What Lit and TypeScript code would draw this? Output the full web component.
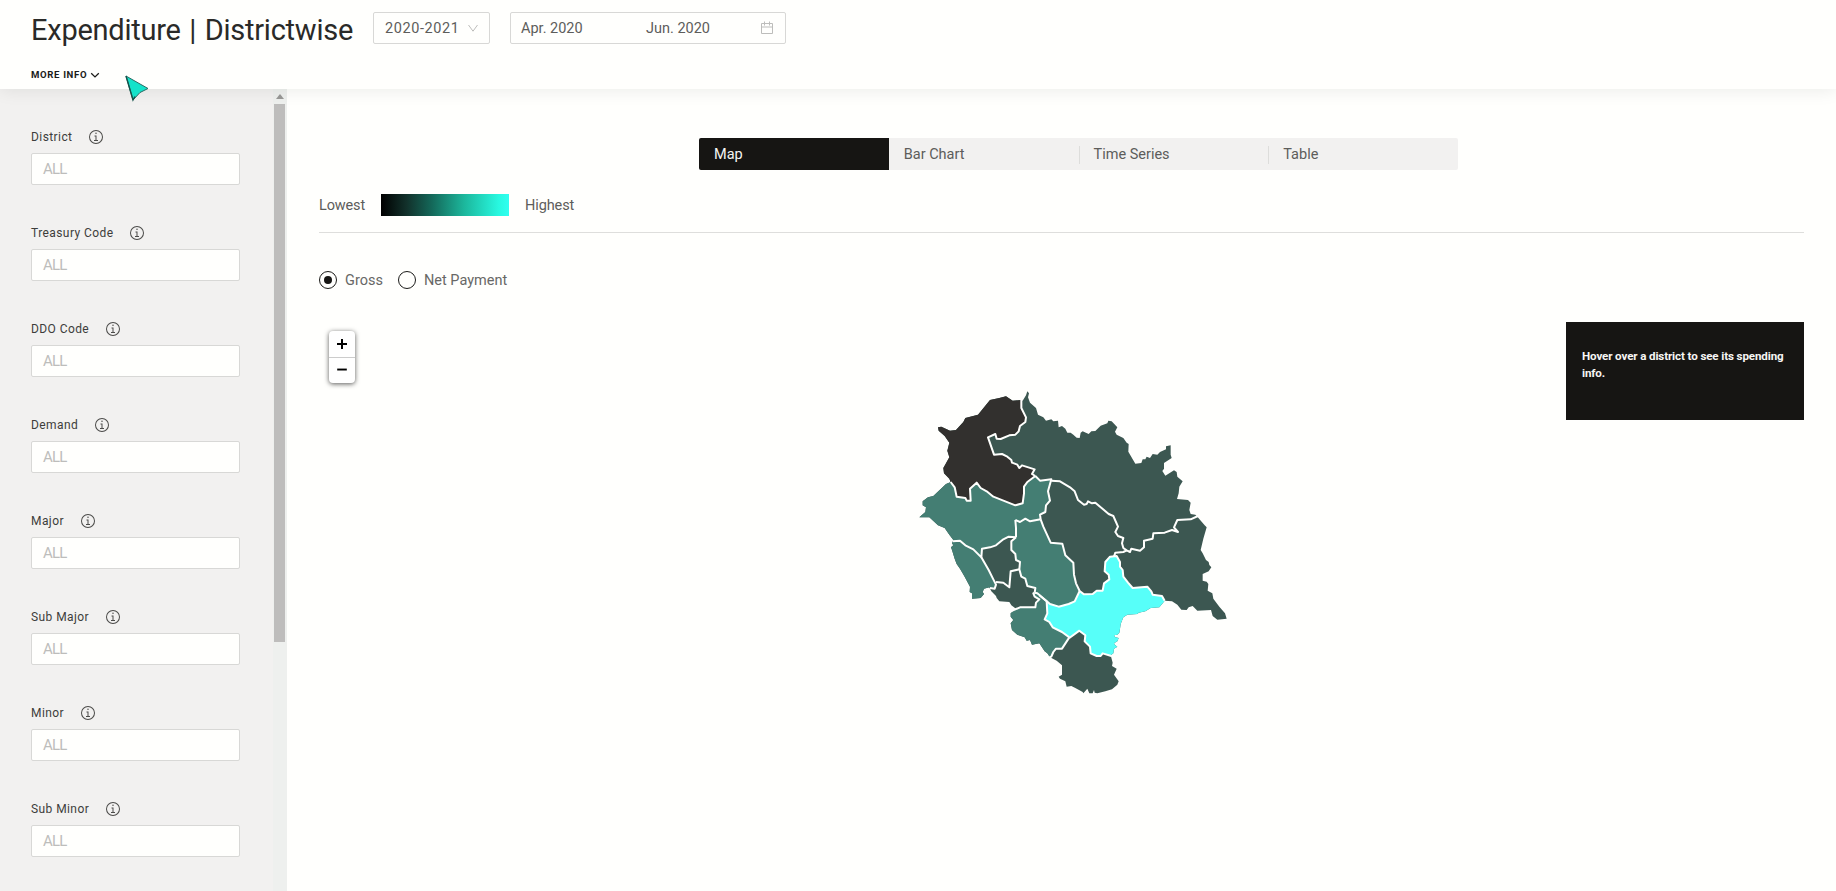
import { LitElement, html, css, svg } from "lit";
import { customElement, property } from "lit/decorators.js";

const OUTLINE =
  "352,34 357,40 354,52 360,68 378,84 384,104 400,112 408,122 424,118 430,124 444,122 446,142 456,138 466,146 472,158 482,158 490,164 500,173 509,174 512,158 518,154 536,162 544,154 556,153 572,137 592,130 595,122 605,124 622,142 615,155 620,164 640,174 650,188 656,192 655,215 676,251 694,249 698,238 706,238 710,230 720,234 728,222 742,224 750,216 768,208 768,199 782,196 782,224 785,234 762,249 762,266 757,273 766,287 792,271 800,276 802,290 818,304 808,320 806,340 801,357 834,360 842,368 838,390 842,402 856,404 862,410 884,436 890,442 880,476 872,510 878,520 888,540 896,546 898,555 904,562 896,574 878,582 878,602 890,605 895,612 893,632 907,640 910,656 928,680 945,700 950,716 922,719 908,708 903,690 862,692 848,678 836,682 830,690 814,689 802,674 786,664 764,662 758,670 748,682 722,684 706,694 686,698 682,702 652,704 640,712 632,732 630,746 628,758 622,764 612,766 616,772 626,774 622,784 612,790 616,796 622,800 612,806 610,820 602,826 608,848 606,858 620,866 612,884 626,904 622,914 606,928 586,934 562,940 554,938 552,930 548,940 538,940 532,926 520,940 518,936 496,924 484,918 470,920 466,904 450,896 446,890 456,884 456,856 440,842 420,832 412,820 404,814 388,790 366,794 360,780 350,782 344,772 322,764 306,750 302,730 310,720 302,710 302,700 318,686 304,676 298,666 268,664 260,654 258,648 244,634 238,622 222,626 218,636 222,642 212,654 186,656 186,640 179,636 180,620 164,590 150,566 140,552 134,536 126,510 123,502 130,496 126,490 130,480 118,464 104,444 84,436 58,412 28,412 46,396 48,382 38,376 38,364 54,352 70,348 108,312 122,306 118,296 102,280 100,264 118,232 112,212 118,188 104,168 86,152 84,142 94,140 120,152 138,150 160,126 166,114 204,104 240,60 268,54 288,49 308,62 333,60 338,62 348,46";

const CHAMBA_EAST =
  "334,54 334,84 348,112 346,126 330,138 326,154 316,164 298,166 272,177 260,176 256,162 234,172 252,224 276,222 292,230 304,240 306,248 322,254 328,264 336,256 374,268 366,282 376,288";
const CHAMBA_SOUTH =
  "122,306 134,322 140,350 166,354 170,362 182,362 180,326 200,308 212,324 230,334 250,350 316,376 338,370 342,340 342,320 352,306 376,288";
const KANGRA_EAST =
  "376,288 390,302 424,298 414,334 420,362 408,376 406,396 390,404 392,418";
const MANDI_NORTH = "392,418 360,424 346,416 330,426 316,420";
const KANGRA_MANDI = "316,420 318,444 318,472";
const KANGRA_SOUTH =
  "318,472 296,470 280,478 258,496 240,502 216,506 214,532 190,508 166,496 150,482 128,484";
const MANDI_EAST =
  "392,418 400,440 422,488 457,491 466,526 490,548 492,584 498,610 509,633";
const MANDI_SOUTH = "509,633 494,664 476,672 446,680 420,672 406,660 382,640 374,638";
const MANDI_WEST =
  "374,638 376,624 352,618 346,596 334,590 328,568 330,546 318,540 316,522 304,510 304,484 318,472";
const UNA_EAST = "214,532 236,570 250,598 258,614 254,626 240,624";
const BILASPUR_NORTH = "328,568 302,574 298,622 280,608 258,606";
const BILASPUR_SOUTH = "374,638 370,640 374,650 388,658 378,668 376,682 330,682 302,694";
const SOLAN_EAST = "388,646 410,664 412,700 404,718 418,726 428,742 456,756 478,772";
const SOLAN_SOUTH = "478,772 456,806 438,806 430,816 424,830 414,834";
const SHIMLA_NORTH =
  "509,633 522,643 548,642 560,632 578,632 582,610 598,598 596,584 584,574 586,546 600,530 620,528 630,546 630,560 638,570 640,590 654,608 668,624 712,620 724,634 728,644 756,648 764,662";
const SHIMLA_SOUTH =
  "604,828 578,820 572,828 560,828 542,820 540,800 524,784 526,766 508,752 478,774";
const LAHAUL_SOUTH =
  "424,302 450,304 480,322 494,334 504,360 522,374 530,372 534,364 546,370 556,368 596,402 610,408 624,440 616,456 624,468 640,474 636,490 640,504 650,511 660,516 664,506 690,512 702,502 702,482 728,476 730,460 764,458 786,450 804,456 792,442 802,420 842,418 864,408";
const KULLU_SOUTH = "650,511 640,516 616,518 612,530";

const rev = (s: string) => s.split(" ").reverse().join(" ");

// Region polygons run loosely past the state's edge; the outline clips them.
const REGIONS = [
  { cls: "lowest", pts: `${CHAMBA_EAST} ${rev(CHAMBA_SOUTH)} 60,300 40,100 200,20 320,20` },
  {
    cls: "mid",
    pts: `${CHAMBA_SOUTH} ${KANGRA_EAST} ${MANDI_NORTH} ${KANGRA_MANDI} ${KANGRA_SOUTH} 60,470 0,420 20,340`,
  },
  { cls: "mid", pts: `128,484 150,482 166,496 190,508 ${UNA_EAST} 220,680 150,660 100,500` },
  {
    cls: "mid",
    pts: `${MANDI_EAST} ${MANDI_SOUTH} ${MANDI_WEST} 318,444 ${rev(MANDI_NORTH)}`,
  },
  {
    cls: "mid",
    pts: `${rev(BILASPUR_SOUTH)} ${SOLAN_EAST} ${SOLAN_SOUTH} 300,800 280,700`,
  },
  {
    cls: "highest",
    pts: `${SHIMLA_NORTH} 790,720 680,780 650,830 ${SHIMLA_SOUTH} ${rev(SOLAN_EAST)} ${rev(MANDI_SOUTH)}`,
  },
];

const BORDERS = [
  CHAMBA_EAST, CHAMBA_SOUTH, KANGRA_EAST, MANDI_NORTH, KANGRA_MANDI, KANGRA_SOUTH,
  MANDI_EAST, MANDI_SOUTH, MANDI_WEST, UNA_EAST, BILASPUR_NORTH, BILASPUR_SOUTH,
  SOLAN_EAST, SOLAN_SOUTH, SHIMLA_NORTH, SHIMLA_SOUTH, LAHAUL_SOUTH, KULLU_SOUTH,
];

@customElement("district-map")
class DistrictMap extends LitElement {
  static styles = css`
    :host { display: block; width: 330px; height: 330px; }
    svg { display: block; width: 100%; height: 100%; }
    .base { fill: #3c5751; }
    .lowest { fill: #32302e; }
    .mid { fill: #447e73; }
    .highest { fill: #57fff9; }
    .border { fill: none; stroke: #fffffd; stroke-width: 6; stroke-linejoin: round; }
  `;
  render() {
    return html`<svg viewBox="0 0 990 990">
      <defs><clipPath id="state"><polygon points=${OUTLINE}></polygon></clipPath></defs>
      <polygon class="base" points=${OUTLINE}></polygon>
      <g clip-path="url(#state)">
        ${REGIONS.map((r) => svg`<polygon class=${r.cls} points=${r.pts}></polygon>`)}
      </g>
      ${BORDERS.map((b) => svg`<polyline class="border" points=${b}></polyline>`)}
    </svg>`;
  }
}

@customElement("filter-field")
class FilterField extends LitElement {
  @property() label = "";
  static styles = css`
    :host { display: block; height: 96px; }
    .head { display: flex; align-items: center; height: 16px; gap: 16px; }
    .name { font-size: 12px; line-height: 16px; letter-spacing: 0.42px; color: #3d3d3b; }
    svg { width: 16px; height: 16px; fill: #4b4b49; }
    .box {
      box-sizing: border-box; width: 209px; height: 32px; margin-top: 8px; padding-left: 11px;
      border: 1px solid #d8d8d6; border-radius: 2px; background: #fffffd;
      font-size: 15px; line-height: 31px; color: #bdbdbb; letter-spacing: -0.8px;
    }
  `;
  render() {
    return html`<div class="head">
        <span class="name">${this.label}</span>
        <svg viewBox="0 0 32 32">
          <path d="M17 22v-9h-4v2h2v7h-3v2h8v-2zM16 7a1.5 1.5 0 1 0 1.5 1.5A1.5 1.5 0 0 0 16 7z"></path>
          <path d="M16 30a14 14 0 1 1 14-14 14 14 0 0 1-14 14zm0-26a12 12 0 1 0 12 12A12 12 0 0 0 16 4z"></path>
        </svg>
      </div>
      <div class="box">ALL</div>`;
  }
}

@customElement("app-root")
class AppRoot extends LitElement {
  static styles = css`
    :host {
      display: flex; flex-direction: column; position: relative; width: 100%; height: 100vh;
      overflow: hidden; background: #fffffd; color: #5d5d5b;
      font-family: Roboto, "Liberation Sans", sans-serif; font-size: 14.5px;
    }
    * { box-sizing: border-box; }
    header {
      flex: none; height: 89px; padding: 12px 31px 0; background: #fffffd; position: relative; z-index: 1;
      box-shadow: 0 2px 16px rgba(0, 20, 10, 0.08);
    }
    .top { display: flex; align-items: flex-start; }
    h1 {
      margin: 0; width: 342px; font-size: 29px; line-height: 36px; font-weight: 400;
      color: #2a2a28; letter-spacing: -0.24px; word-spacing: 1.6px; white-space: nowrap;
    }
    .select, .range {
      display: flex; align-items: center; height: 32px; border: 1px solid #d8d8d6; border-radius: 2px;
    }
    .select { width: 117px; padding: 0 11px; justify-content: space-between; }
    .range { width: 276px; margin-left: 20px; padding: 0 11px 0 10px; }
    .from { width: 125px; }
    .to { flex: 1; }
    .year { letter-spacing: 0.6px; }
    .icon { fill: none; stroke: #bdbdbb; display: block; }
    .more {
      display: flex; align-items: center; gap: 3px; margin-top: 20px; font-size: 9.6px; line-height: 14px;
      font-weight: 700; letter-spacing: 0.64px; color: #1b1b19;
    }
    .more .icon { stroke: #1b1b19; }
    .body { flex: 1; display: flex; min-height: 0; }
    aside { width: 273px; background: #f2f1f0; padding: 40px 31px 0; overflow: hidden; }
    .track { width: 14px; background: #eef0ee; display: flex; flex-direction: column; align-items: center; }
    .up { height: 15px; padding-top: 5px; }
    .up svg { display: block; fill: #989896; }
    .thumb { width: 11px; height: 538px; background: #bebdbc; margin-right: 1px; }
    main { flex: 1; padding: 49px 32px 0; display: flex; flex-direction: column; }
    .tabs {
      width: 759px; height: 32px; display: flex; background: #f2f1f0; border-radius: 2px;
      overflow: hidden; margin-left: 380px;
    }
    .tab { flex: 1; display: flex; align-items: center; padding: 1px 0 0 15px; }
    .tab + .tab { background: linear-gradient(#dddddb, #dddddb) 0 8px / 1px 18px no-repeat; }
    .tab.on { background: #161513; color: #f4f4f2; }
    .tab.on + .tab { background: none; }
    .legend {
      display: flex; align-items: center; height: 63px; padding-top: 8px; border-bottom: 1px solid #dededc;
    }
    .lowest { width: 62px; letter-spacing: -0.15px; }
    .highest { letter-spacing: -0.1px; }
    .scale {
      width: 128px; height: 22px; margin-right: 16px;
      background: linear-gradient(90deg, #000 0%, #12312b 20%, #14695a 40%, #1cb79c 65%, #28f8e0 92%, #30fff0 100%);
    }
    .radios { display: flex; align-items: center; height: 18px; margin-top: 38px; color: #686866; }
    .radio { width: 18px; height: 18px; border: 1px solid #1b1b19; border-radius: 50%; margin-right: 8px; padding: 4px; }
    .dot { width: 8px; height: 8px; border-radius: 50%; background: #161513; }
    .gross { width: 53px; }
    .canvas { position: relative; flex: 1; margin-top: 33px; }
    .zoom {
      position: absolute; left: 10px; top: 9px; width: 26px; border-radius: 4px; background: #fff;
      box-shadow: 0 1px 5px rgba(0, 0, 0, 0.65);
    }
    .zoom svg { display: block; width: 26px; height: 26px; stroke: #000; stroke-width: 2; }
    .zoom svg + svg { border-top: 1px solid #ccc; }
    .place { position: absolute; left: 591px; top: 58px; }
    .tip {
      position: absolute; right: 0; top: 0; width: 238px; height: 98px; padding: 26px 16px 0; background: #161513;
      color: #f6f6f4; font-size: 11.6px; font-weight: 700; line-height: 17px; white-space: nowrap;
      letter-spacing: -0.12px;
    }
    .cursor { position: absolute; z-index: 2; left: 124px; top: 74px; }
  `;

  private filters = ["District", "Treasury Code", "DDO Code", "Demand", "Major", "Sub Major", "Minor", "Sub Minor"];
  private tabs = ["Map", "Bar Chart", "Time Series", "Table"];

  render() {
    return html`
      <header>
        <div class="top">
          <h1>Expenditure | Districtwise</h1>
          <div class="select">
            <span class="year">2020-2021</span>
            <svg class="icon" width="10" height="10" viewBox="0 0 10 10"><path d="M.5 2 5 8.2 9.500 2"></path></svg>
          </div>
          <div class="range">
            <span class="from">Apr. 2020</span><span class="to">Jun. 2020</span>
            <svg class="icon" width="14" height="14" viewBox="0 0 14 14">
              <path d="M1.500 2.500h11v10h-11zM1.500 6h11M4.500 .5v4M9.500 .5v4"></path>
            </svg>
          </div>
        </div>
        <div class="more">
          <span>MORE INFO</span>
          <svg class="icon" width="10" height="8" viewBox="0 0 10 8"><path stroke-width="1.300" d="m1.200 2.200 3.800 3.700 3.800-3.700"></path></svg>
        </div>
      </header>
      <div class="body">
        <aside>${this.filters.map((f) => html`<filter-field .label=${f}></filter-field>`)}</aside>
        <div class="track">
          <div class="up"><svg width="8" height="5"><path d="M0 5 4 0l4 5z"></path></svg></div>
          <div class="thumb"></div>
        </div>
        <main>
          <div class="tabs">
            ${this.tabs.map((t, i) => html`<div class=${i ? "tab" : "tab on"}><span>${t}</span></div>`)}
          </div>
          <div class="legend">
            <span class="lowest">Lowest</span>
            <div class="scale"></div>
            <span class="highest">Highest</span>
          </div>
          <div class="radios">
            <div class="radio"><div class="dot"></div></div><span class="gross">Gross</span>
            <div class="radio"></div><span class="net">Net Payment</span>
          </div>
          <div class="canvas">
            <div class="zoom">
              <svg viewBox="0 0 26 26"><path d="M8 13h10M13 8v10"></path></svg>
              <svg viewBox="0 0 26 26"><path d="M8 12h10"></path></svg>
            </div>
            <district-map class="place"></district-map>
            <div class="tip">Hover over a district to see its spending<br />info.</div>
          </div>
        </main>
      </div>
      <svg class="cursor" width="26" height="28" viewBox="0 0 26 28">
        <path d="M2 2 24 14.500 16 18.500 9 26z" fill="#14e2ca"></path>
        <path d="M2 2 24 14.500 16 18.500 9 26z" fill="none" stroke="#2b6b64" stroke-width="1"></path>
        <path d="M2 2 9 26l2-3.500" fill="none" stroke="#14544c" stroke-width="1.400"></path>
      </svg>
    `;
  }
}
